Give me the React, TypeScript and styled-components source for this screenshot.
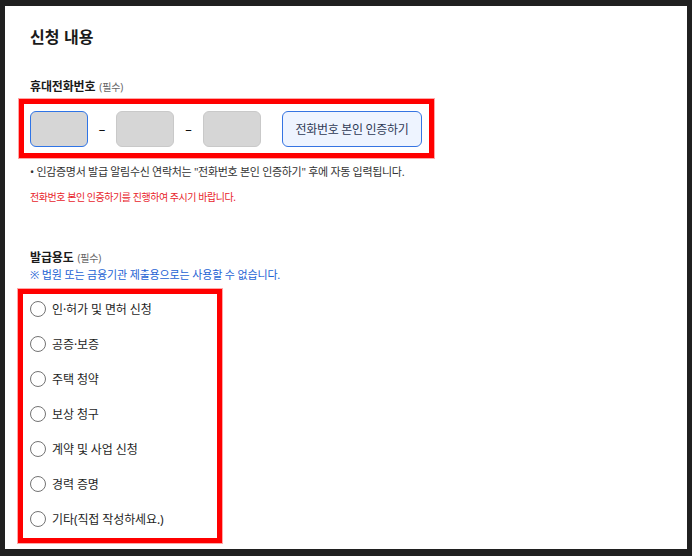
import styled, { createGlobalStyle } from "styled-components";

const GlobalStyle = createGlobalStyle`
  html, body {
    margin: 0;
    padding: 0;
    background: #202020;
  }
  body {
    font-family: "Noto Sans", "Noto Sans CJK KR", sans-serif;
    color: #222;
  }
`;

const Page = styled.div`
  width: 692px;
  height: 556px;
  box-sizing: border-box;
  padding: 6px 5px 7px 5px;
  background: #202020;
`;

const Panel = styled.section`
  height: 100%;
  box-sizing: border-box;
  background: #fff;
  padding: 19px 0 0 25px;
  display: flex;
  flex-direction: column;
  align-items: flex-start;
`;

const Heading = styled.h2`
  margin: 0;
  font-size: 16px;
  line-height: 24px;
  font-weight: 700;
  letter-spacing: 0.1px;
  color: #1a1a1a;
`;

const FieldLabel = styled.div<{ $top: number }>`
  margin-top: ${(p) => p.$top}px;
  font-size: 12px;
  line-height: 18px;
  font-weight: 700;
  letter-spacing: -0.15px;
  color: #1a1a1a;

  & small {
    font-size: 10px;
    font-weight: 400;
    letter-spacing: -0.2px;
    color: #666;
    margin-left: 4px;
  }
`;

const Highlight = styled.div<{ $left: number; $top: number }>`
  margin-left: ${(p) => p.$left}px;
  margin-top: ${(p) => p.$top}px;
  border: 5px solid #ff0000;
  box-shadow: 0 0 0 1px rgba(255, 80, 80, 0.5);
  box-sizing: border-box;
`;

const PhoneBox = styled(Highlight)`
  display: flex;
  align-items: center;
  padding: 7px 7px 6px 6px;
`;

const PhoneInput = styled.input<{ $active?: boolean }>`
  width: 58px;
  height: 36px;
  box-sizing: border-box;
  margin: 0;
  padding: 0;
  border-radius: 6px;
  background: #d6d6d6;
  border: 1px solid ${(p) => (p.$active ? "#2f74e6" : "#c9c9c9")};
  outline: none;
`;

const Dash = styled.span<{ $w: number }>`
  width: ${(p) => p.$w}px;
  text-align: center;
  font-size: 13px;
  color: #111;
`;

const VerifyButton = styled.button`
  margin-left: 21px;
  width: 140px;
  height: 36px;
  box-sizing: border-box;
  border: 1px solid #3574e2;
  border-radius: 6px;
  background: #eef4ff;
  font-family: inherit;
  font-size: 12px;
  letter-spacing: -0.3px;
  color: #2e3a55;
  cursor: pointer;
`;

const Note = styled.p<{ $top: number; $color: string; $size: number; $ls: number }>`
  margin: ${(p) => p.$top}px 0 0 0;
  font-size: ${(p) => p.$size}px;
  line-height: 16px;
  letter-spacing: ${(p) => p.$ls}px;
  color: ${(p) => p.$color};
`;

const PurposeBox = styled(Highlight)`
  width: 204px;
  padding: 5px 0 9px 7px;
  display: flex;
  flex-direction: column;
  gap: 15px;
`;

const RadioRow = styled.label`
  display: flex;
  align-items: center;
  height: 20px;
  gap: 6px;
  font-size: 12px;
  letter-spacing: -0.1px;
  color: #1e1e1e;
  cursor: pointer;
`;

const Radio = styled.input`
  appearance: none;
  margin: 0;
  width: 16px;
  height: 16px;
  border: 1.3px solid #737373;
  border-radius: 50%;
  background: #fff;
  box-sizing: border-box;
`;

const purposes = [
  "인·허가 및 면허 신청",
  "공증·보증",
  "주택 청약",
  "보상 청구",
  "계약 및 사업 신청",
  "경력 증명",
  "기타(직접 작성하세요.)",
];

export default function App() {
  return (
    <Page>
      <GlobalStyle />
      <Panel>
        <Heading>신청 내용</Heading>

        <FieldLabel $top={29}>
          휴대전화번호<small>(필수)</small>
        </FieldLabel>
        <PhoneBox $left={-11} $top={3}>
          <PhoneInput $active aria-label="휴대전화 앞자리" />
          <Dash $w={28}>–</Dash>
          <PhoneInput aria-label="휴대전화 가운데자리" />
          <Dash $w={29}>–</Dash>
          <PhoneInput aria-label="휴대전화 뒷자리" />
          <VerifyButton>전화번호 본인 인증하기</VerifyButton>
        </PhoneBox>
        <Note $top={6} $size={11} $ls={-0.3} $color="#333">
          • 인감증명서 발급 알림수신 연락처는 "전화번호 본인 인증하기" 후에 자동 입력됩니다.
        </Note>
        <Note $top={9} $size={10} $ls={-0.45} $color="#e8242c">
          전화번호 본인 인증하기를 진행하여 주시기 바랍니다.
        </Note>

        <FieldLabel $top={44}>
          발급용도<small>(필수)</small>
        </FieldLabel>
        <Note $top={0} $size={11} $ls={-0.15} $color="#2463d4">
          ※ 법원 또는 금융기관 제출용으로는 사용할 수 없습니다.
        </Note>
        <PurposeBox $left={-12} $top={6}>
          {purposes.map((p) => (
            <RadioRow key={p}>
              <Radio type="radio" name="purpose" />
              {p}
            </RadioRow>
          ))}
        </PurposeBox>
      </Panel>
    </Page>
  );
}
